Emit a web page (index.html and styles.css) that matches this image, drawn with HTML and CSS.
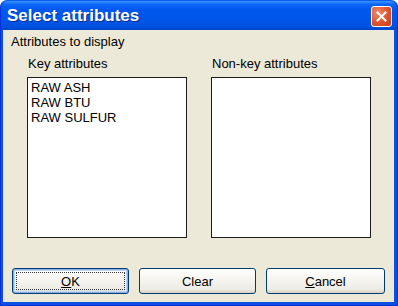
FILE: index.html
```html
<!DOCTYPE html>
<html lang="en">
<head>
    <meta charset="UTF-8">
    <title>Select attributes</title>
    <link rel="stylesheet" href="styles.css">
</head>
<body>
    <div class="window">
        <div class="titlebar">
            <span class="title">Select attributes</span>
            <button class="close-btn" title="Close">
                <svg width="11" height="11" viewBox="0 0 11 11">
                    <path d="M1.5 1.5 L9.5 9.5 M9.5 1.5 L1.5 9.5" stroke="#fff" stroke-width="2" stroke-linecap="square"/>
                </svg>
            </button>
        </div>

        <div class="client">
            <div class="group-label">Attributes to display</div>

            <div class="columns">
                <div class="column">
                    <label class="list-label">Key attributes</label>
                    <ul class="listbox">
                        <li>RAW ASH</li>
                        <li>RAW BTU</li>
                        <li>RAW SULFUR</li>
                    </ul>
                </div>
                <div class="column">
                    <label class="list-label">Non-key attributes</label>
                    <ul class="listbox"></ul>
                </div>
            </div>

            <div class="buttons">
                <button class="btn default"><span class="focus"><u>O</u>K</span></button>
                <button class="btn">Clear</button>
                <button class="btn wide"><u>C</u>ancel</button>
            </div>
        </div>
    </div>
</body>
</html>
```

FILE: styles.css
```css
* {
    margin: 0;
    padding: 0;
    box-sizing: border-box;
}

body {
    background: #ffffff;
    font-family: 'Liberation Sans', Arial, sans-serif;
}

.window {
    width: 398px;
    height: 306px;
    display: flex;
    flex-direction: column;
    background: #0a4fe0;
    border-radius: 7px 7px 0 0;
    border: 1px solid #0831d9;
    border-top-color: #0a5ff0;
}

.titlebar {
    height: 29px;
    display: flex;
    align-items: center;
    justify-content: space-between;
    padding: 0 5px 0 6px;
    border-radius: 7px 7px 0 0;
    background: linear-gradient(to bottom, #3d95ff 0%, #0a66f6 12%, #0058ee 30%, #0055e8 70%, #0050dd 90%, #0046cc 100%);
}

.title {
    color: #ffffff;
    font-weight: bold;
    font-size: 17px;
    text-shadow: 1px 1px 0 #0a2a8a;
    padding-top: 1px;
}

.close-btn {
    width: 21px;
    height: 21px;
    border: 1px solid #ffffff;
    border-radius: 3px;
    background: radial-gradient(circle at 30% 30%, #f08a6c 0%, #e0522d 55%, #c8401e 100%);
    display: flex;
    align-items: center;
    justify-content: center;
    margin-top: 2px;
}

.client {
    flex: 1;
    margin: 0 3px 3px 2px;
    background: #ece9d8;
    padding: 4px 8px 0 8px;
    display: flex;
    flex-direction: column;
    font-size: 13px;
    line-height: 15px;
    color: #000;
}

.columns {
    display: flex;
    gap: 24px;
    margin-top: 7px;
    padding-left: 16px;
}

.column {
    display: flex;
    flex-direction: column;
}

.list-label {
    padding-left: 1px;
    margin-bottom: 6px;
}

.listbox {
    list-style: none;
    width: 160px;
    height: 161px;
    background: #ffffff;
    border: 1px solid #1c1c1c;
    padding: 2px 3px;
}

.buttons {
    display: flex;
    gap: 10px;
    margin-top: 30px;
    padding-left: 1px;
}

.btn {
    width: 117px;
    height: 26px;
    font-family: 'Liberation Sans', Arial, sans-serif;
    font-size: 13px;
    color: #000;
    border: 1px solid #003c74;
    border-radius: 3px;
    background: linear-gradient(to bottom, #ffffff 0%, #f6f5f0 40%, #ecebe4 85%, #d6d0c5 100%);
    display: flex;
    align-items: center;
    justify-content: center;
}

.btn.wide {
    width: 119px;
}

.btn.default {
    box-shadow: inset 0 0 0 1px #8ab0ea, inset 0 0 0 2px #c0d4f4;
}

.btn .focus {
    display: flex;
    align-items: center;
    justify-content: center;
    width: calc(100% - 6px);
    height: calc(100% - 6px);
    border: 1px dotted #333;
}
```
